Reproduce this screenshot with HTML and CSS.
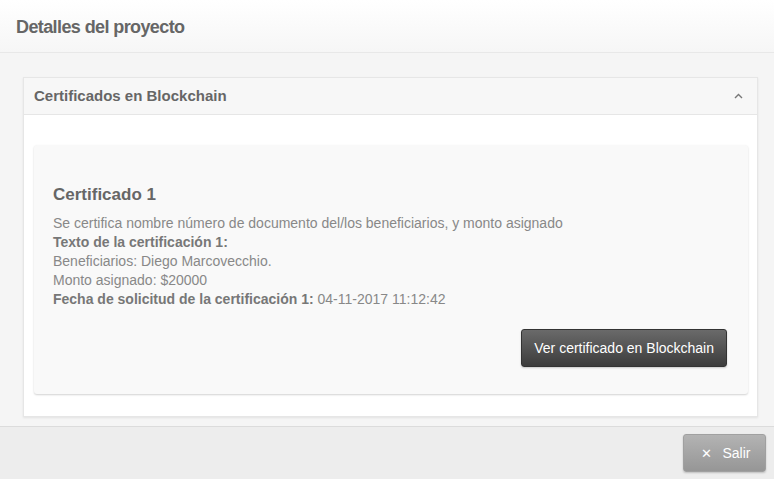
FILE: index.html
```html
<!DOCTYPE html>
<html lang="es">
<head>
  <meta charset="UTF-8">
  <meta name="viewport" content="width=device-width, initial-scale=1.0">
  <title>Detalles del proyecto</title>
  <link rel="stylesheet" href="styles.css">
</head>
<body>
  <div class="modal">
    <div class="modal-header">
      <h2>Detalles del proyecto</h2>
    </div>

    <div class="modal-body">
      <div class="panel">
        <div class="panel-heading">
          <span>Certificados en Blockchain</span>
          <svg class="chevron" width="9" height="6" viewBox="0 0 9 6">
            <path d="M1 5 L4.5 1.5 L8 5" fill="none" stroke="#777" stroke-width="1.4"/>
          </svg>
        </div>
        <div class="panel-body">
          <div class="cert">
            <h3>Certificado 1</h3>
            <p>
              Se certifica nombre número de documento del/los beneficiarios, y monto asignado<br>
              <b>Texto de la certificación 1:</b><br>
              Beneficiarios: Diego Marcovecchio.<br>
              Monto asignado: $20000<br>
              <b>Fecha de solicitud de la certificación 1:</b> 04-11-2017 11:12:42
            </p>
            <div class="cert-actions">
              <button class="btn-dark">Ver certificado en Blockchain</button>
            </div>
          </div>
        </div>
      </div>
    </div>

    <div class="modal-footer">
      <button class="btn-gray"><span class="x">&#x2715;</span>Salir</button>
    </div>
  </div>
</body>
</html>
```

FILE: styles.css
```css
body {
  margin: 0;
  font-family: "Liberation Sans", Arial, sans-serif;
  background-color: #f5f5f5;
  color: #888;
}

.modal {
  display: flex;
  flex-direction: column;
  height: 100vh;
}

.modal-header {
  flex-shrink: 0;
  height: 52px;
  padding: 0 16px;
  display: flex;
  align-items: center;
  background: linear-gradient(#ffffff, #f6f6f6);
  border-bottom: 1px solid #e8e8e8;
}

.modal-header h2 {
  margin: 2px 0 0;
  font-size: 18px;
  font-weight: bold;
  color: #666;
  letter-spacing: -0.6px;
}

.modal-body {
  flex: 1;
  min-height: 0;
  overflow: hidden;
  padding: 24px 16px 0 23px;
}

.panel {
  background: #fff;
  border: 1px solid #e6e6e6;
  box-shadow: 0 1px 2px rgba(0, 0, 0, 0.08);
}

.panel-heading {
  height: 37px;
  box-sizing: border-box;
  padding: 0 14px 1px 10px;
  display: flex;
  align-items: center;
  justify-content: space-between;
  background: #f7f7f7;
  border-bottom: 1px solid #e6e6e6;
  font-size: 15px;
  font-weight: bold;
  color: #666;
}

.panel-body {
  padding: 30px 9px 22px 10px;
}

.cert {
  background: #f9f9f9;
  border-radius: 3px;
  box-shadow: 0 1px 2px rgba(0, 0, 0, 0.18);
  padding: 40px 20px 27px 19px;
}

.cert h3 {
  margin: 0 0 9px;
  font-size: 17px;
  font-weight: bold;
  color: #666;
}

.cert p {
  margin: 0;
  font-size: 14px;
  line-height: 19px;
  color: #888;
}

.cert p b {
  color: #777;
}

.cert-actions {
  display: flex;
  justify-content: flex-end;
  margin-top: 20px;
  margin-right: 1px;
}

.btn-dark {
  height: 38px;
  padding: 0 12px;
  font-family: inherit;
  font-size: 14px;
  color: #fff;
  background: linear-gradient(#6a6a6a, #3c3c3c);
  border: 1px solid #333;
  border-radius: 3px;
  box-shadow: 0 1px 2px rgba(0, 0, 0, 0.2);
  cursor: pointer;
}

.modal-footer {
  flex-shrink: 0;
  height: 53px;
  box-sizing: border-box;
  padding: 7px 8px;
  display: flex;
  justify-content: flex-end;
  background: #ededed;
  border-top: 1px solid #dcdcdc;
}

.btn-gray {
  width: 83px;
  height: 38px;
  padding: 0 0 0 3px;
  font-family: inherit;
  font-size: 14px;
  color: #fff;
  background: linear-gradient(#b3b3b3, #969696);
  border: 1px solid #a0a0a0;
  border-radius: 3px;
  box-shadow: 0 1px 2px rgba(0, 0, 0, 0.2);
  cursor: pointer;
}

.btn-gray .x {
  font-size: 13px;
  margin-right: 10px;
}
```
